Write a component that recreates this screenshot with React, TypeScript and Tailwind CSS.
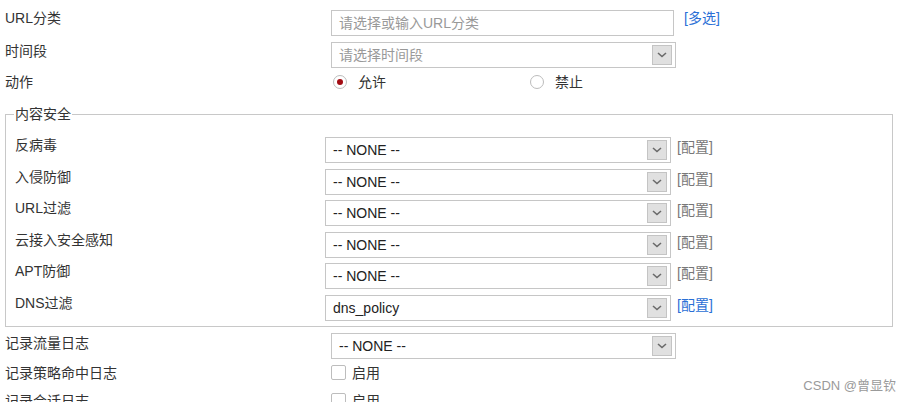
import React from "react";

const font = { fontFamily: '"Liberation Sans", "Noto Sans CJK SC", sans-serif' };

function Arrow() {
  return (
    <div className="mr-[3px] flex h-[20px] w-[20px] shrink-0 items-center justify-center border border-[#c4c4c4] bg-[#e0e0e0]">
      <svg width="10" height="6" viewBox="0 0 10 6">
        <path d="M1 1 L5 4.5 L9 1" fill="none" stroke="#6a6a6a" strokeWidth="1.6" />
      </svg>
    </div>
  );
}

function Select({ value, placeholder, width }: { value?: string; placeholder?: string; width: string }) {
  return (
    <div className={`flex h-[26px] items-center justify-between border border-[#c6c6c6] bg-white ${width}`}>
      <span className={`pl-[7px] ${value ? "text-[#222]" : "text-[#999]"}`}>{value ?? placeholder}</span>
      <Arrow />
    </div>
  );
}

const inner = [
  { label: "反病毒", value: "-- NONE --", blue: false },
  { label: "入侵防御", value: "-- NONE --", blue: false },
  { label: "URL过滤", value: "-- NONE --", blue: false },
  { label: "云接入安全感知", value: "-- NONE --", blue: false },
  { label: "APT防御", value: "-- NONE --", blue: false },
  { label: "DNS过滤", value: "dns_policy", blue: true },
];

function Checkbox() {
  return (
    <label className="flex items-center gap-[6px]">
      <span className="h-[15px] w-[15px] rounded-[2px] border border-[#bdbdbd] bg-white" />
      <span>启用</span>
    </label>
  );
}

export default function App() {
  return (
    <div
      className="relative h-[402px] w-[910px] overflow-hidden bg-white pl-[5px] text-[14px] leading-[20px] text-[#333]"
      style={font}
    >
      {/* URL分类 */}
      <div className="flex items-start pt-[10px]">
        <div className="mt-[-2px] w-[326px]">URL分类</div>
        <div className="flex h-[26px] w-[343px] items-center border border-[#c6c6c6] pl-[7px] text-[#999]">
          请选择或输入URL分类
        </div>
        <a className="ml-[10px] mt-[-2px] text-[#2a6fd6]">[多选]</a>
      </div>

      {/* 时间段 */}
      <div className="mt-[6px] flex items-start">
        <div className="mt-[-1px] w-[326px]">时间段</div>
        <Select placeholder="请选择时间段" width="w-[345px]" />
      </div>

      {/* 动作 */}
      <div className="flex h-[28px] items-center">
        <div className="w-[326px]">动作</div>
        <div className="flex w-[199px] items-center pl-[2px]">
          <span className="flex h-[14px] w-[14px] items-center justify-center rounded-full border border-[#bcbcbc] bg-white">
            <span className="h-[6px] w-[6px] rounded-full bg-[#a30d14]" />
          </span>
          <span className="ml-[11px]">允许</span>
        </div>
        <div className="flex items-center">
          <span className="h-[14px] w-[14px] rounded-full border border-[#bcbcbc] bg-white" />
          <span className="ml-[11px]">禁止</span>
        </div>
      </div>

      {/* 内容安全 */}
      <fieldset className="mt-[8px] w-[888px] border border-[#c8c8c8] pb-[5px] pl-[9px]">
        <legend className="ml-[-1px] px-[1px]">内容安全</legend>
        <div className="pt-[13px]">
          {inner.map((r, i) => (
            <div
              key={r.label}
              className={`flex items-start ${i === inner.length - 1 ? "h-[26px]" : "h-[31.6px]"}`}
            >
              <div className="mt-[-2px] w-[310px]">{r.label}</div>
              <Select value={r.value} width="w-[346px]" />
              <a className={`ml-[6px] ${r.blue ? "text-[#2a6fd6]" : "text-[#777]"}`}>[配置]</a>
            </div>
          ))}
        </div>
      </fieldset>

      {/* 日志 */}
      <div className="mt-[6px] flex items-start">
        <div className="w-[326px]">记录流量日志</div>
        <Select value="-- NONE --" width="w-[345px]" />
      </div>
      <div className="flex h-[28px] items-center">
        <div className="w-[326px]">记录策略命中日志</div>
        <Checkbox />
      </div>
      <div className="flex h-[28px] items-center">
        <div className="w-[326px]">记录会话日志</div>
        <Checkbox />
      </div>

      <div className="absolute right-[14px] top-[376px] text-[13px] text-[#9a9a9a]">CSDN @曾显钦</div>
    </div>
  );
}
